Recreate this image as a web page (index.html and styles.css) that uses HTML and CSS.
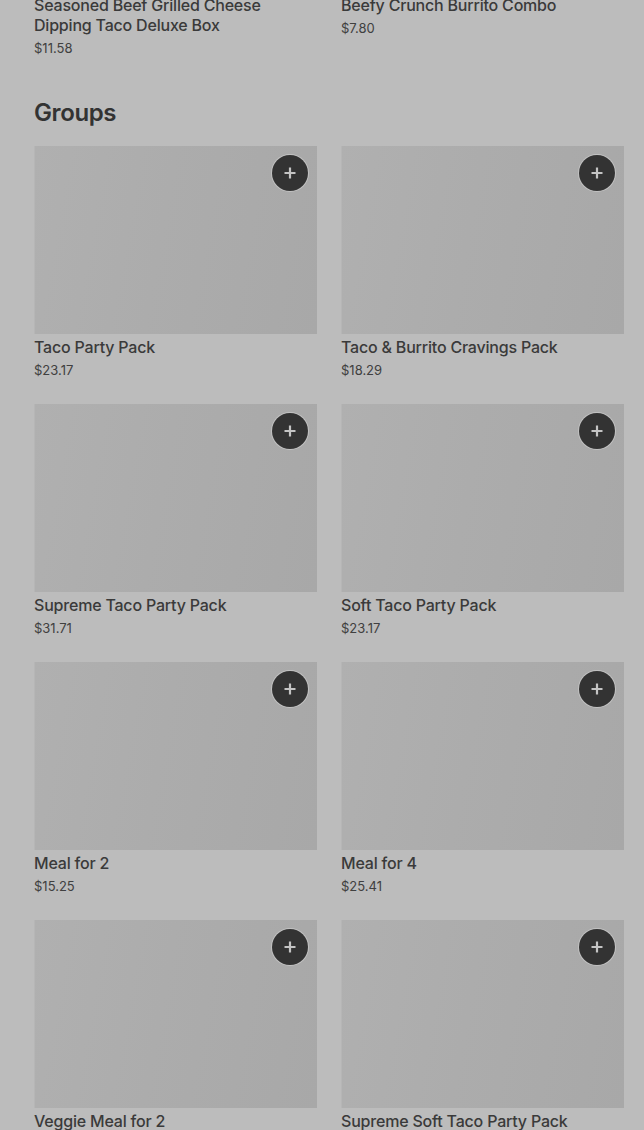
FILE: index.html
```html
<!DOCTYPE html>
<html>
<head>
<meta charset="utf-8">
<link rel="stylesheet" href="styles.css">
</head>
<body>
<main class="page">
  <section class="section">
    <div class="grid">
      <div class="card">
        <div class="thumb"></div>
        <div class="title">Seasoned Beef Grilled Cheese Dipping Taco Deluxe Box</div>
        <div class="price">$11.58</div>
      </div>
      <div class="card">
        <div class="thumb"></div>
        <div class="title">Beefy Crunch Burrito Combo</div>
        <div class="price">$7.80</div>
      </div>
    </div>
  </section>
  <section class="section">
    <h2 class="heading">Groups</h2>
    <div class="grid">
      <div class="card"><div class="thumb"><button class="add"><svg viewBox="0 0 16 16" width="16" height="16"><path d="M8 2.5v11M2.5 8h11" stroke="currentColor" stroke-width="2.2"/></svg></button></div><div class="title">Taco Party Pack</div><div class="price">$23.17</div></div>
      <div class="card"><div class="thumb"><button class="add"><svg viewBox="0 0 16 16" width="16" height="16"><path d="M8 2.5v11M2.5 8h11" stroke="currentColor" stroke-width="2.2"/></svg></button></div><div class="title">Taco &amp; Burrito Cravings Pack</div><div class="price">$18.29</div></div>
      <div class="card"><div class="thumb"><button class="add"><svg viewBox="0 0 16 16" width="16" height="16"><path d="M8 2.5v11M2.5 8h11" stroke="currentColor" stroke-width="2.2"/></svg></button></div><div class="title">Supreme Taco Party Pack</div><div class="price">$31.71</div></div>
      <div class="card"><div class="thumb"><button class="add"><svg viewBox="0 0 16 16" width="16" height="16"><path d="M8 2.5v11M2.5 8h11" stroke="currentColor" stroke-width="2.2"/></svg></button></div><div class="title">Soft Taco Party Pack</div><div class="price">$23.17</div></div>
      <div class="card"><div class="thumb"><button class="add"><svg viewBox="0 0 16 16" width="16" height="16"><path d="M8 2.5v11M2.5 8h11" stroke="currentColor" stroke-width="2.2"/></svg></button></div><div class="title">Meal for 2</div><div class="price">$15.25</div></div>
      <div class="card"><div class="thumb"><button class="add"><svg viewBox="0 0 16 16" width="16" height="16"><path d="M8 2.5v11M2.5 8h11" stroke="currentColor" stroke-width="2.2"/></svg></button></div><div class="title">Meal for 4</div><div class="price">$25.41</div></div>
      <div class="card"><div class="thumb"><button class="add"><svg viewBox="0 0 16 16" width="16" height="16"><path d="M8 2.5v11M2.5 8h11" stroke="currentColor" stroke-width="2.2"/></svg></button></div><div class="title">Veggie Meal for 2</div><div class="price">$15.25</div></div>
      <div class="card"><div class="thumb"><button class="add"><svg viewBox="0 0 16 16" width="16" height="16"><path d="M8 2.5v11M2.5 8h11" stroke="currentColor" stroke-width="2.2"/></svg></button></div><div class="title">Supreme Soft Taco Party Pack</div><div class="price">$31.71</div></div>
    </div>
  </section>
</main>
</body>
</html>
```
FILE: styles.css
```css
html, body {
  margin: 0;
  padding: 0;
  background: #bcbcbc;
  overflow: hidden;
}
body {
  font-family: Inter, "Noto Sans", sans-serif;
  color: #363636;
}
.page {
  margin-top: -196px;
  padding: 0 20px 0 34px;
}
.section + .section {
  margin-top: 39px;
}
.heading {
  margin: 0 0 17px;
  font-size: 24px;
  line-height: 32px;
  font-weight: 600;
  letter-spacing: -0.4px;
  color: #333;
}
.grid {
  display: grid;
  grid-template-columns: 283px 283px;
  column-gap: 24px;
  row-gap: 24px;
}
.card {
  display: flex;
  flex-direction: column;
}
.thumb {
  position: relative;
  height: 188px;
  background: linear-gradient(100deg, #b0b0b0 0%, #acacac 45%, #a8a8a8 100%);
  box-shadow: inset 1px 0 0 #b6b6b6;
}
.add {
  position: absolute;
  top: 9px;
  right: 9px;
  width: 36px;
  height: 36px;
  border-radius: 50%;
  border: none;
  padding: 0;
  background: #333;
  color: #c4c4c4;
  display: flex;
  align-items: center;
  justify-content: center;
  box-shadow: 0 0 0 1px #c2c2c2;
}
.title {
  margin-top: 3px;
  font-size: 16px;
  line-height: 20px;
  font-weight: 500;
  letter-spacing: -0.2px;
  color: #3a3a3a;
}
.price {
  margin-top: 3px;
  font-size: 13px;
  line-height: 20px;
  color: #404040;
}
```
